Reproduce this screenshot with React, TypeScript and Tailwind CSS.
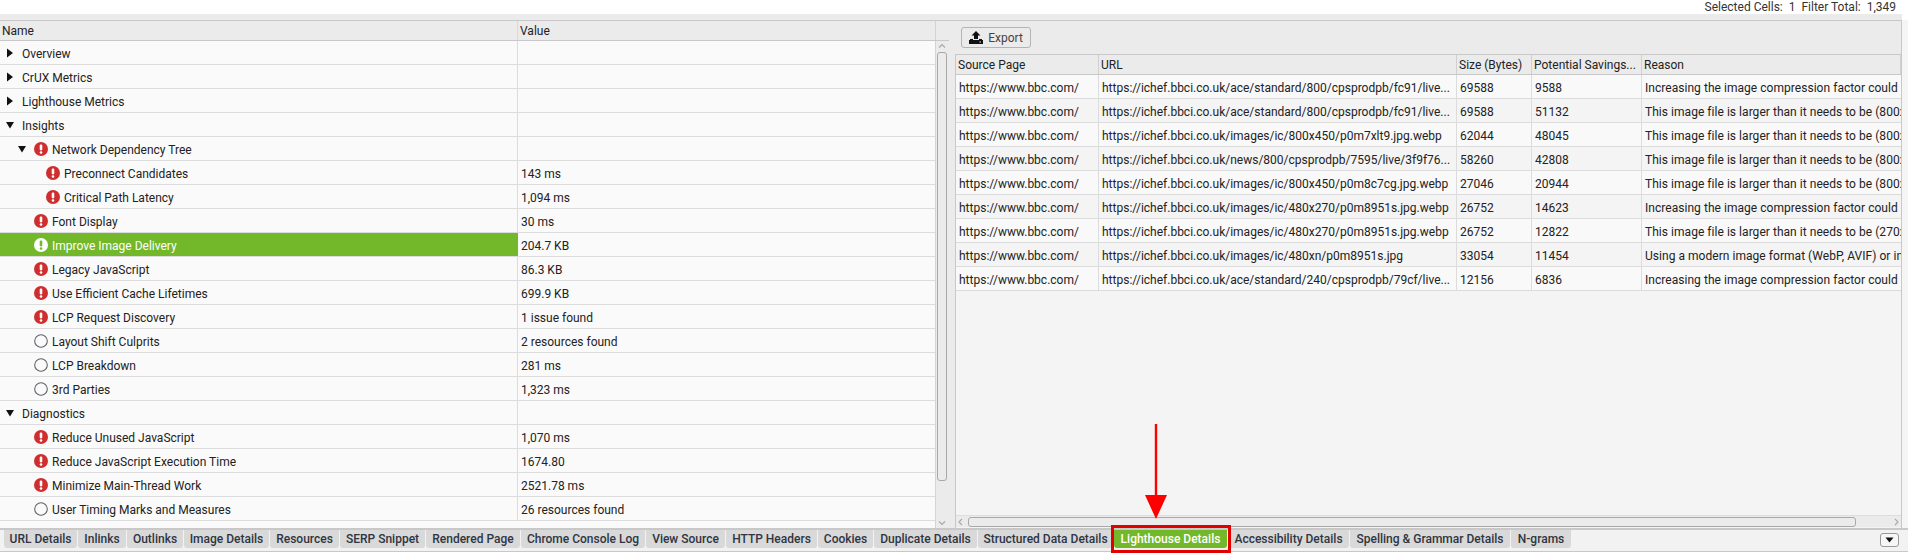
const leftRows: [number, string, string, string, string?][] = [
  [0, "r", "Overview", ""],
  [0, "r", "CrUX Metrics", ""],
  [0, "r", "Lighthouse Metrics", ""],
  [0, "d", "Insights", ""],
  [1, "d", "Network Dependency Tree", "", "e"],
  [2, "", "Preconnect Candidates", "143 ms", "e"],
  [2, "", "Critical Path Latency", "1,094 ms", "e"],
  [1, "", "Font Display", "30 ms", "e"],
  [1, "", "Improve Image Delivery", "204.7 KB", "s"],
  [1, "", "Legacy JavaScript", "86.3 KB", "e"],
  [1, "", "Use Efficient Cache Lifetimes", "699.9 KB", "e"],
  [1, "", "LCP Request Discovery", "1 issue found", "e"],
  [1, "", "Layout Shift Culprits", "2 resources found", "c"],
  [1, "", "LCP Breakdown", "281 ms", "c"],
  [1, "", "3rd Parties", "1,323 ms", "c"],
  [0, "d", "Diagnostics", ""],
  [1, "", "Reduce Unused JavaScript", "1,070 ms", "e"],
  [1, "", "Reduce JavaScript Execution Time", "1674.80", "e"],
  [1, "", "Minimize Main-Thread Work", "2521.78 ms", "e"],
  [1, "", "User Timing Marks and Measures", "26 resources found", "c"],
];

const U = "https://ichef.bbci.co.uk/";
const rightRows = [
  [U + "ace/standard/800/cpsprodpb/fc91/live...", "69588", "9588", "Increasing the image compression factor could improve this"],
  [U + "ace/standard/800/cpsprodpb/fc91/live...", "69588", "51132", "This image file is larger than it needs to be (800x450)"],
  [U + "images/ic/800x450/p0m7xlt9.jpg.webp", "62044", "48045", "This image file is larger than it needs to be (800x450)"],
  [U + "news/800/cpsprodpb/7595/live/3f9f76...", "58260", "42808", "This image file is larger than it needs to be (800x450)"],
  [U + "images/ic/800x450/p0m8c7cg.jpg.webp", "27046", "20944", "This image file is larger than it needs to be (800x450)"],
  [U + "images/ic/480x270/p0m8951s.jpg.webp", "26752", "14623", "Increasing the image compression factor could improve this"],
  [U + "images/ic/480x270/p0m8951s.jpg.webp", "26752", "12822", "This image file is larger than it needs to be (270x150)"],
  [U + "images/ic/480xn/p0m8951s.jpg", "33054", "11454", "Using a modern image format (WebP, AVIF) or increasing"],
  [U + "ace/standard/240/cpsprodpb/79cf/live...", "12156", "6836", "Increasing the image compression factor could improve this"],
];

const tabs: [string, number][] = [
  ["URL Details", 73], ["Inlinks", 48], ["Outlinks", 56], ["Image Details", 85], ["Resources", 69],
  ["SERP Snippet", 85], ["Rendered Page", 94], ["Chrome Console Log", 124], ["View Source", 79],
  ["HTTP Headers", 91], ["Cookies", 55], ["Duplicate Details", 103], ["Structured Data Details", 135],
  ["Lighthouse Details", 113], ["Accessibility Details", 121], ["Spelling & Grammar Details", 160], ["N-grams", 60],
];

function Issue({ kind }: { kind?: string }) {
  if (kind === "c")
    return (
      <svg width="14" height="14" viewBox="0 0 14 14" className="shrink-0">
        <circle cx="7" cy="7" r="6.3" fill="#fafafa" stroke="#5f6368" strokeWidth="1.1" />
      </svg>
    );
  const bg = kind === "s" ? "#ffffff" : "#cf2e2e";
  const fg = kind === "s" ? "#72b82a" : "#ffffff";
  return (
    <svg width="14" height="14" viewBox="0 0 14 14" className="shrink-0">
      <circle cx="7" cy="7" r="7" fill={bg} />
      <rect x="5.7" y="2.6" width="2.6" height="5.8" rx="1.1" fill={fg} />
      <circle cx="7" cy="10.5" r="1.3" fill={fg} />
    </svg>
  );
}

function Tri({ dir }: { dir: string }) {
  if (dir === "r")
    return (
      <svg width="8" height="10" viewBox="0 0 8 10" className="shrink-0">
        <path d="M1 0.5 L7 5 L1 9.5 Z" fill="#111" />
      </svg>
    );
  return (
    <svg width="10" height="8" viewBox="0 0 10 8" className="shrink-0">
      <path d="M1 1 L9 1 L5 7.5 Z" fill="#111" />
    </svg>
  );
}

function Chevron({ d }: { d: string }) {
  return (
    <svg width="10" height="10" viewBox="0 0 10 10">
      <path d={d} fill="none" stroke="#a8a8a8" strokeWidth="1.1" />
    </svg>
  );
}

export default function App() {
  return (
    <div className="relative w-[1908px] h-[553px] overflow-hidden flex flex-col bg-white text-[12px] leading-[16px] text-[#222]" style={{ fontFamily: "Roboto, sans-serif" }}>
      <div className="h-[14px] shrink-0 pr-[12px] flex justify-end items-center gap-[6px] text-[#333] bg-white">
        <span>Selected Cells:&nbsp; 1</span>
        <span>Filter Total:&nbsp; 1,349</span>
      </div>
      <div className="h-[6px] shrink-0 bg-[#ebebeb] mr-[6px]" />
      <div className="h-[508px] shrink-0 bg-[#f5f5f5]">
        <div className="w-[1902px] h-full flex border-t border-r border-[#c8c8c8] bg-[#ebebeb]">
          <div className="w-[936px] shrink-0 flex flex-col border-r border-[#d4d4d4] bg-[#fafafa]">
            <div className="h-[20px] shrink-0 flex bg-[#ebebeb] border-b border-[#c8c8c8]">
              <div className="w-[518px] pl-[2px] pt-[1px] leading-[18px] border-r border-[#d9d9d9]">Name</div>
              <div className="pl-[2px] pt-[1px] leading-[18px]">Value</div>
            </div>
            {leftRows.map((r) => (
              <div key={r[2]} className="h-[24px] shrink-0 flex border-b border-[#dcdcdc]">
                <div className={r[4] === "s" ? "w-[518px] shrink-0 flex items-center bg-[#72b82a] text-white" : "w-[518px] shrink-0 flex items-center border-r border-[#dcdcdc]"}>
                  <div className={r[0] === 0 ? "w-[22px] shrink-0 flex justify-center pr-[2px]" : r[0] === 1 ? "w-[34px] shrink-0 flex justify-end pr-[7px]" : "w-[46px] shrink-0"}>
                    {r[1] && <Tri dir={r[1]} />}
                  </div>
                  {r[4] && <Issue kind={r[4]} />}
                  <span className={r[4] ? "pl-[4px] pt-[2px]" : "pt-[2px]"}>{r[2]}</span>
                </div>
                <div className="pl-[3px] pt-[2px] flex items-center">{r[3]}</div>
              </div>
            ))}
          </div>
          <div className="w-[13px] shrink-0 flex flex-col items-center pr-[1px] bg-[#ebebeb]">
            <div className="w-[14px] h-[20px] shrink-0 border-b border-[#c8c8c8]" />
            <div className="h-[10px] shrink-0 flex items-center"><Chevron d="M2 6.5 L5 3.5 L8 6.5" /></div>
            <div className="w-[10px] h-[429px] shrink-0 mt-[1px] border border-[#a8a8a8] rounded-[3px] bg-[#ebebeb]" />
            <div className="mt-[37px] shrink-0"><Chevron d="M2 3.5 L5 6.5 L8 3.5" /></div>
          </div>
          <div className="flex-1 min-w-0 flex flex-col bg-[#ebebeb]">
            <div className="h-[33px] shrink-0 pl-[12px] pt-[6px]">
              <button className="w-[70px] h-[21px] flex items-center justify-center gap-[5px] border border-[#b4b4b4] rounded-[3px] text-[#444]">
                <svg width="14" height="13" viewBox="0 0 14 13">
                  <path d="M7 0 L11.5 4.5 H9 V8 H5 V4.5 H2.5 Z" fill="#111" />
                  <path d="M1 8 H4 V9 H10 V8 H13 V9 H14 V13 H0 V9 H1 Z" fill="#111" />
                  <rect x="10.5" y="10.5" width="1.5" height="1" fill="#e8e8e8" />
                </svg>
                Export
              </button>
            </div>
            <div className="flex-1 min-h-0 ml-[6px] flex flex-col bg-[#f4f4f4] border-l border-[#c8c8c8]">
              <div className="h-[21px] shrink-0 flex bg-[#ebebeb] border-y border-[#c8c8c8]">
                {[["Source Page", "w-[143px]"], ["URL", "w-[358px]"], ["Size (Bytes)", "w-[75px]"], ["Potential Savings...", "w-[110px]"], ["Reason", "flex-1"]].map(([t, w]) => (
                  <div key={t} className={w + " pl-[2px] pt-[2px] leading-[17px] border-r border-[#d0d0d0] overflow-hidden whitespace-nowrap"}>{t}</div>
                ))}
              </div>
              {rightRows.map((r, i) => (
                <div key={i} className={(i % 2 ? "bg-[#f4f4f4]" : "bg-[#f9f9f9]") + " h-[24px] shrink-0 flex items-stretch border-b border-[#dcdcdc] whitespace-nowrap"}>
                  <div className="w-[143px] pl-[3px] pt-[2px] flex items-center border-r border-[#dcdcdc]">https://www.bbc.com/</div>
                  <div className="w-[358px] pl-[3px] pt-[2px] flex items-center border-r border-[#dcdcdc]">{r[0]}</div>
                  <div className="w-[75px] pl-[3px] pt-[2px] flex items-center border-r border-[#dcdcdc]">{r[1]}</div>
                  <div className="w-[110px] pl-[3px] pt-[2px] flex items-center border-r border-[#dcdcdc]">{r[2]}</div>
                  <div className="flex-1 min-w-0 pl-[3px] pt-[2px] flex items-center overflow-hidden tracking-[0.04px]">{r[3]}</div>
                </div>
              ))}
              <div className="flex-1" />
              <div className="h-[12px] shrink-0 flex items-center bg-[#ebebeb] border-t border-[#dddddd] mb-[1px]">
                <div className="w-[12px] shrink-0"><Chevron d="M6 2 L3 5 L6 8" /></div>
                <div className="w-[888px] shrink-0 h-[10px] border border-[#a8a8a8] rounded-[3px]" />
                <div className="flex-1 flex justify-end"><Chevron d="M4 2 L7 5 L4 8" /></div>
              </div>
            </div>
          </div>
        </div>
      </div>
      <div className="flex-1 min-h-0 relative flex items-start gap-[1px] bg-[#f2f2f2] border-t-2 border-b border-[#c8c8c8] pl-[4px] mb-[1px]">
        {tabs.map(([t, w]) => (
          <div key={t} style={{ width: w }} className={"h-[18px] shrink-0 rounded-b-[3px] flex items-center justify-center font-medium whitespace-nowrap " + (t === "Lighthouse Details" ? "bg-[#72b82a] text-white" : "bg-[#d9d9d9] text-[#2f3542]")}>
            {t}
          </div>
        ))}
        <div className="absolute right-[9px] top-[3px] w-[19px] h-[14px] border border-[#999] rounded-[3px] bg-[#f6f6f6] flex items-center justify-center">
          <svg width="9" height="6" viewBox="0 0 9 6"><path d="M0.5 0.5 H8.5 L4.5 5.5 Z" fill="#111" /></svg>
        </div>
      </div>
      <div className="absolute left-[1111px] top-[525px] w-[120px] h-[28px] border-[3px] border-[#e00000]" />
      <svg className="absolute left-[1145px] top-[424px]" width="22" height="95" viewBox="0 0 22 95">
        <path d="M9.8 0 H12.2 V71 H22 L11 95 L0 71 H9.8 Z" fill="#ff0000" />
      </svg>
    </div>
  );
}
